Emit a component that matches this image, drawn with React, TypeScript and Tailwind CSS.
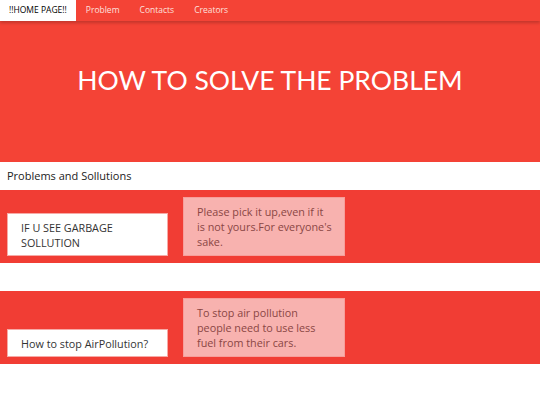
import React from "react";

const body = { fontFamily: '"Open Sans", "DejaVu Sans", sans-serif' };

function Section({ q, a }: { q: React.ReactNode; a: React.ReactNode }) {
  return (
    <div className="bg-[#f13d34] px-[7px] py-[7px] flex items-end gap-[15px]">
      <div className="w-[161px] bg-white border border-[#f7aaa6] pl-[13px] pr-[8px] pt-[6px] pb-[5px] text-[10.8px] leading-[15px] text-[#333]">
        {q}
      </div>
      <div className="w-[162px] bg-[#f8b2af] border border-[#f79e9a] pl-[13px] pr-[2px] pt-[6px] pb-[6px] text-[10.8px] leading-[15px] text-[#8a4644] whitespace-nowrap">
        {a}
      </div>
    </div>
  );
}

export default function App() {
  return (
    <div className="w-[540px] h-[405px] bg-white overflow-hidden" style={body}>
      <div className="bg-[#f44336] h-[162px] flex flex-col">
        <div className="h-[21px] flex items-stretch text-[8.5px] shadow-[0_2px_3px_rgba(0,0,0,0.2)]">
          <div className="bg-white text-black px-[9px] flex items-center">!!HOME PAGE!!</div>
          <div className="text-[#fde0de] px-[10px] flex items-center">Problem</div>
          <div className="text-[#fde0de] px-[10px] flex items-center">Contacts</div>
          <div className="text-[#fde0de] px-[10px] flex items-center">Creators</div>
        </div>
        <div
          className="pt-[43px] text-center text-white text-[26.5px] leading-[32px]"
          style={{ fontFamily: 'Lato, sans-serif' }}
        >
          HOW TO SOLVE THE PROBLEM
        </div>
      </div>
      <div className="h-[28px] flex items-center px-[7px] text-[11px] text-[#222]">
        Problems and Sollutions
      </div>
      <Section
        q={<>IF U SEE GARBAGE<br />SOLLUTION</>}
        a={<>Please pick it up,even if it<br />is not yours.For everyone's<br />sake.</>}
      />
      <div className="h-[28px]" />
      <Section
        q={<>How to stop AirPollution?</>}
        a={<>To stop air pollution<br />people need to use less<br />fuel from their cars.</>}
      />
    </div>
  );
}
